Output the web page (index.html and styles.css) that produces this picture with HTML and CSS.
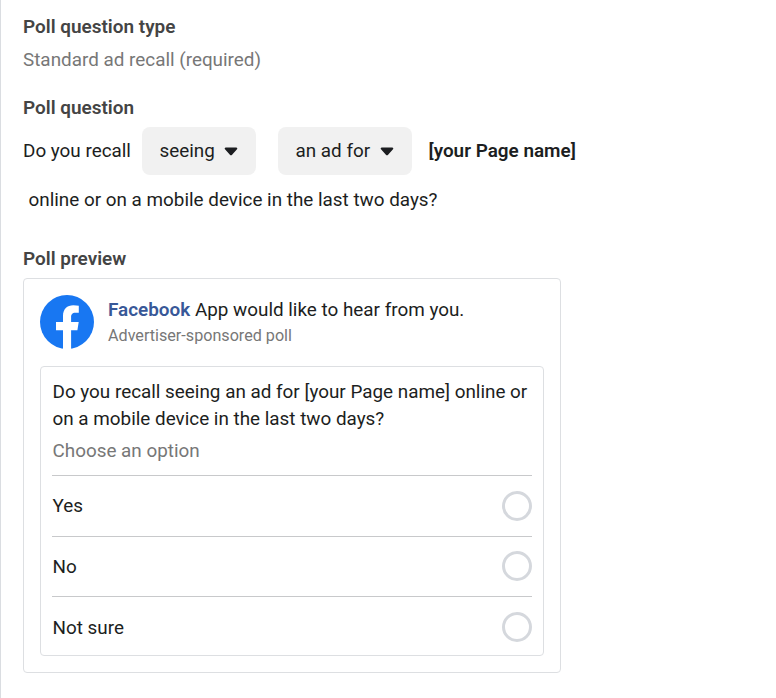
FILE: index.html
```html
<!DOCTYPE html>
<html lang="en">
<head>
  <meta charset="UTF-8" />
  <meta name="viewport" content="width=device-width, initial-scale=1.0"/>
  <title>Brand Survey Poll</title>
  <link rel="stylesheet" href="styles.css">
</head>
<body>
  <main class="panel">
    <section class="poll-type">
      <h2>Poll question type</h2>
      <p class="muted">Standard ad recall (required)</p>
    </section>

    <section class="poll-question">
      <h2>Poll question</h2>
      <div class="question-row">
        <span class="lead">Do you recall</span>
        <button class="dropdown verb" type="button">
          <span>seeing</span>
          <svg class="caret" viewBox="0 0 14 9"><path d="M1.8.5h10.4c1 0 1.5 1.1.8 1.8L8.1 7.8c-.6.7-1.6.7-2.2 0L1 2.3C.3 1.6.8.5 1.8.5z"/></svg>
        </button>
        <button class="dropdown object" type="button">
          <span>an ad for</span>
          <svg class="caret" viewBox="0 0 14 9"><path d="M1.8.5h10.4c1 0 1.5 1.1.8 1.8L8.1 7.8c-.6.7-1.6.7-2.2 0L1 2.3C.3 1.6.8.5 1.8.5z"/></svg>
        </button>
        <strong class="page-name">[your Page name]</strong>
      </div>
      <p class="question-end">online or on a mobile device in the last two days?</p>
    </section>

    <section class="poll-preview">
      <h2>Poll preview</h2>
      <div class="card">
        <div class="card-header">
          <svg class="logo" viewBox="0 0 54 54">
            <circle cx="27" cy="27" r="27" fill="#1877f2"/>
            <path fill="#fff" d="M23 54V35.2h-7V27h7v-5.9c0-7 4.1-10.8 10.3-10.8 2.1 0 3.9.2 5.5.5v6.9h-3.3c-3.4 0-4.4 2-4.4 4.2V27h7.6l-1.3 8.2h-6.3V54z"/>
          </svg>
          <div class="sponsor">
            <div class="sponsor-name"><strong>Facebook</strong> App would like to hear from you.</div>
            <div class="sponsor-note">Advertiser-sponsored poll</div>
          </div>
        </div>
        <div class="poll">
          <p class="poll-text">Do you recall seeing an ad for [your Page name] online or on a mobile device in the last two days?</p>
          <p class="hint">Choose an option</p>
          <div class="option"><span class="answer">Yes</span><span class="radio"></span></div>
          <div class="option"><span class="answer">No</span><span class="radio"></span></div>
          <div class="option"><span class="answer">Not sure</span><span class="radio"></span></div>
        </div>
      </div>
    </section>
  </main>
</body>
</html>
```
FILE: styles.css
```css
* {
  box-sizing: border-box;
}
body {
  margin: 0;
  background: #fff;
  color: #1c1e21;
  font-family: Roboto, sans-serif;
  font-size: 18.88px;
  line-height: 27px;
}
h2, p {
  margin: 0;
}
h2 {
  font-size: 18.95px;
  font-weight: 600;
  color: #444;
}
strong {
  font-size: 18.9px;
  font-weight: 600;
}
.panel {
  height: 698px;
  padding: 13px 22px 0;
  border-left: 1px solid #dadde1;
}
.muted {
  margin-top: 6px;
  color: #777;
}
.poll-question {
  margin-top: 21px;
}
.question-row {
  display: flex;
  align-items: center;
  height: 48px;
  margin-top: 6px;
}
.lead {
  width: 119px;
  padding-bottom: 1px;
}
.dropdown {
  display: flex;
  align-items: center;
  justify-content: space-between;
  height: 48px;
  padding: 0 18px 1px 17.5px;
  border: 0;
  border-radius: 8px;
  background: #f1f1f1;
  color: inherit;
  font: inherit;
}
.verb {
  width: 114px;
}
.object {
  width: 134px;
  margin-left: 22px;
}
.caret {
  width: 14px;
  height: 9px;
  margin-top: 2px;
  fill: #1c1e21;
}
.page-name {
  margin-left: 16.5px;
  padding-bottom: 1px;
}
.question-end {
  margin: 11px 0 0 5.5px;
}
.poll-preview {
  margin-top: 32px;
}
.card {
  width: 538px;
  height: 395px;
  margin-top: 6px;
  padding: 16px;
  border: 1px solid #dddfe2;
  border-radius: 4px;
}
.card-header {
  display: flex;
  height: 54px;
}
.logo {
  width: 54px;
  height: 54px;
  margin-right: 14px;
}
.sponsor {
  padding-top: 1px;
}
.sponsor-name strong {
  color: #385898;
}
.sponsor-note {
  color: #777;
  font-size: 16.15px;
  line-height: 25px;
}
.poll {
  height: 290px;
  margin-top: 17px;
  padding: 11px;
  border: 1px solid #dddfe2;
  border-radius: 4px;
}
.poll-text {
  padding-left: .5px;
}
.hint {
  margin: 5px 0 11px;
  padding-left: .5px;
  color: #777;
}
.option {
  display: flex;
  align-items: center;
  justify-content: space-between;
  height: 60.5px;
  border-top: 1px solid #c8c9cb;
}
.answer {
  padding: .4px 0 0 .5px;
}
.option:last-child .answer {
  padding-top: 1px;
}
.radio {
  width: 30px;
  height: 30px;
  border: 3px solid #d5d8dd;
  border-radius: 50%;
}
```
